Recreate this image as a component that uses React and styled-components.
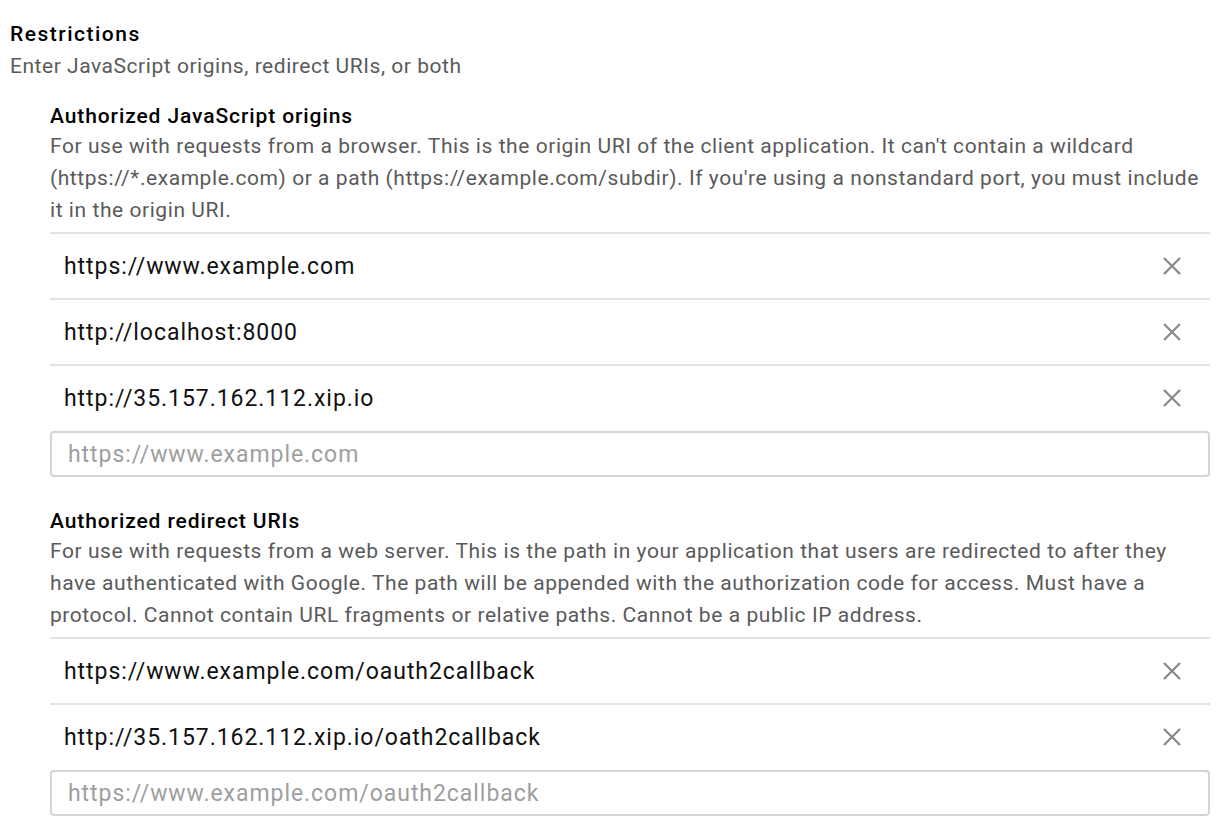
import React from "react";
import styled, { createGlobalStyle } from "styled-components";

const Global = createGlobalStyle`
  html, body { margin: 0; padding: 0; background: #fff; }
  body { font-family: Roboto, "Noto Sans", "Liberation Sans", sans-serif; -webkit-font-smoothing: antialiased; }
  * { box-sizing: border-box; }
`;

const Page = styled.div`
  padding: 18px 16px 0 10px;
  width: 1226px;
`;

const Title = styled.div`
  font-size: 21px;
  line-height: 32px;
  font-weight: 500;
  letter-spacing: 1.5px;
  color: #000;
`;

const Subtitle = styled.div`
  font-size: 21px;
  line-height: 32px;
  letter-spacing: 0.54px;
  color: #5a5a5a;
`;

const Section = styled.section`
  margin: ${(p) => p.$top}px 0 0 40px;
  width: 1160px;
`;

const Heading = styled.div`
  font-size: 21px;
  line-height: 28px;
  font-weight: 500;
  letter-spacing: 0.9px;
  color: #000;
`;

const Help = styled.p`
  margin: 0 0 6px;
  font-size: 21px;
  line-height: 32px;
  letter-spacing: 0.56px;
  color: #5a5a5a;
`;

const List = styled.div`
  display: flex;
  flex-direction: column;
`;

const Row = styled.div`
  display: flex;
  align-items: center;
  justify-content: space-between;
  height: 66px;
  border-top: 2px solid #e3e3e3;
  padding: 0 29px 0 14px;
`;

const Value = styled.span`
  font-size: 23px;
  letter-spacing: 0.95px;
  color: #111;
`;

const Remove = styled.button`
  display: flex;
  align-items: center;
  justify-content: center;
  width: 18px;
  height: 18px;
  padding: 0;
  border: 0;
  background: none;
  cursor: pointer;
  color: #8a8a8a;
`;

const Input = styled.input`
  display: block;
  width: 100%;
  height: 46px;
  margin-top: 1px;
  border: 2px solid #d4d4d4;
  border-radius: 4px;
  padding: 0 16px;
  font-family: inherit;
  font-size: 23px;
  letter-spacing: 0.95px;
  color: #111;
  outline: none;
  &::placeholder { color: #9e9e9e; }
`;

const CloseIcon = () => (
  <svg width="18" height="18" viewBox="0 0 18 18" fill="none">
    <path d="M1 1 L17 17 M17 1 L1 17" stroke="currentColor" strokeWidth="2.3" />
  </svg>
);

const UriList = ({ items, placeholder }) => (
  <List>
    {items.map((v) => (
      <Row key={v}>
        <Value>{v}</Value>
        <Remove aria-label="Remove">
          <CloseIcon />
        </Remove>
      </Row>
    ))}
    <Input placeholder={placeholder} />
  </List>
);

export default function App() {
  return (
    <>
      <Global />
      <Page>
        <Title>Restrictions</Title>
        <Subtitle>Enter JavaScript origins, redirect URIs, or both</Subtitle>
        <Section $top={20}>
          <Heading>Authorized JavaScript origins</Heading>
          <Help>
            For use with requests from a browser. This is the origin URI of the client application. It can't contain a wildcard (https://*.example.com) or a path (https://example.com/subdir). If you're using a nonstandard port, you must include it in the origin URI.
          </Help>
          <UriList
            items={["https://www.example.com", "http://localhost:8000", "http://35.157.162.112.xip.io"]}
            placeholder="https://www.example.com"
          />
        </Section>
        <Section $top={30}>
          <Heading>Authorized redirect URIs</Heading>
          <Help>
            For use with requests from a web server. This is the path in your application that users are redirected to after they have authenticated with Google. The path will be appended with the authorization code for access. Must have a protocol. Cannot contain URL fragments or relative paths. Cannot be a public IP address.
          </Help>
          <UriList
            items={["https://www.example.com/oauth2callback", "http://35.157.162.112.xip.io/oath2callback"]}
            placeholder="https://www.example.com/oauth2callback"
          />
        </Section>
      </Page>
    </>
  );
}
